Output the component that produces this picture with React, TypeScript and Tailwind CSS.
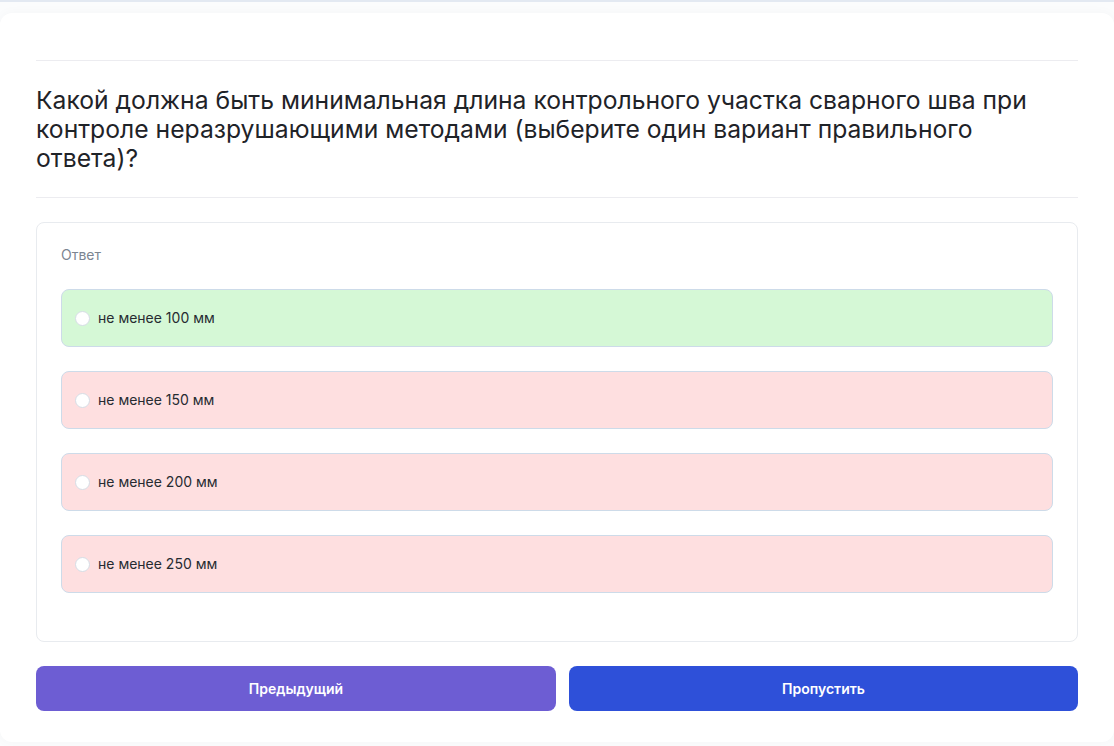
const options = [
  { label: "не менее 100 мм", correct: true },
  { label: "не менее 150 мм", correct: false },
  { label: "не менее 200 мм", correct: false },
  { label: "не менее 250 мм", correct: false },
];

export default function App() {
  return (
    <div
      className="min-h-screen border-t-2 border-[#e3e9f2] bg-[#fbfcfd] pt-[11px]"
      style={{ fontFamily: "Inter, 'Noto Sans', sans-serif" }}
    >
      <div className="rounded-xl bg-white px-9 pb-[31px] pt-[47px] shadow-[0_0_12px_rgba(15,23,42,0.03)]">
        <div className="border-t border-[#ececf0]" />

        {/* Question */}
        <h1 className="max-w-[1000px] pb-[24px] pt-[25px] text-[24.7px] leading-[29px] font-normal text-[#1f2328]">
          Какой должна быть минимальная длина контрольного участка сварного шва при
          контроле неразрушающими методами (выберите один вариант правильного
          ответа)?
        </h1>

        <div className="border-t border-[#ececf0]" />

        {/* Answers */}
        <div className="mt-6 rounded-lg border border-[#e8ebef] bg-white px-6 pb-12 pt-[22px]">
          <div className="text-sm text-[#7c8591]">Ответ</div>
          <div className="mt-6 flex flex-col gap-6">
            {options.map((o) => (
              <label
                key={o.label}
                className={
                  "flex h-[58px] items-center gap-2 rounded-lg border border-[#cddbe9] px-[13px] text-sm text-[#262b31] " +
                  (o.correct ? "bg-[#d5f8d6]" : "bg-[#fedfe0]")
                }
              >
                <span className="h-[15px] w-[15px] rounded-full border border-[#d6dde5] bg-white" />
                {o.label}
              </label>
            ))}
          </div>
        </div>

        {/* Buttons */}
        <div className="mt-6 grid grid-cols-[520px_1fr] gap-[13px]">
          <button className="h-[45px] rounded-lg bg-[#6d5dd3] text-sm font-semibold text-white">
            Предыдущий
          </button>
          <button className="h-[45px] rounded-lg bg-[#2e50d9] text-sm font-semibold text-white">
            Пропустить
          </button>
        </div>
      </div>
    </div>
  );
}
